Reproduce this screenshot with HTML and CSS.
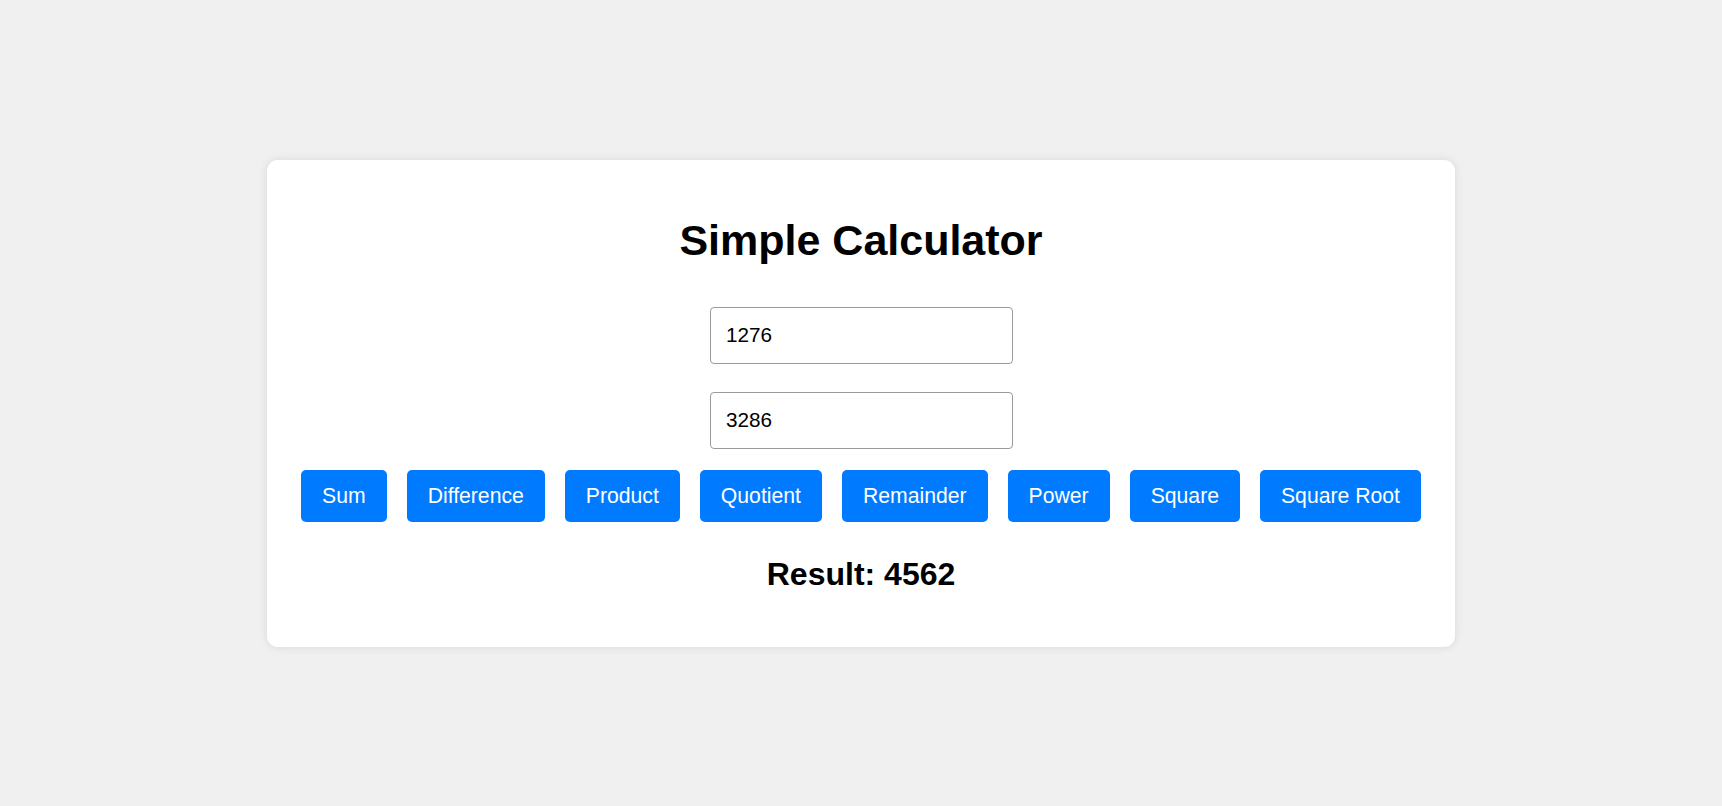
FILE: index.html
```html
<!DOCTYPE html>
<html>
<head>
<meta charset="utf-8">
<link rel="stylesheet" href="styles.css">
</head>
<body>
<div class="page">
  <div class="card">
    <h1 class="title">Simple Calculator</h1>
    <input class="num" type="text" value="1276">
    <input class="num second" type="text" value="3286">
    <div class="buttons">
      <button class="btn">Sum</button>
      <button class="btn">Difference</button>
      <button class="btn">Product</button>
      <button class="btn">Quotient</button>
      <button class="btn">Remainder</button>
      <button class="btn">Power</button>
      <button class="btn">Square</button>
      <button class="btn">Square Root</button>
    </div>
    <h2 class="result">Result: 4562</h2>
  </div>
</div>
</body>
</html>
```
FILE: styles.css
```css
html, body {
  margin: 0;
  padding: 0;
  background: #f0f0f0;
  font-family: "Liberation Sans", Arial, sans-serif;
}
.page {
  height: 806px;
  display: flex;
  align-items: center;
  justify-content: center;
}
.card {
  box-sizing: border-box;
  width: 1188px;
  height: 487px;
  background: #ffffff;
  border-radius: 11px;
  box-shadow: 0 0 10px rgba(0, 0, 0, 0.1);
  padding: 56px 31px 0;
  display: flex;
  flex-direction: column;
  align-items: center;
}
.title {
  margin: 0;
  font-size: 43px;
  line-height: 48px;
  font-weight: bold;
  color: #000;
}
.num {
  box-sizing: border-box;
  width: 303px;
  height: 57px;
  margin-top: 43px;
  padding: 0 15.5px;
  border: 1px solid #9a9a9a;
  border-radius: 4px;
  font-family: "Liberation Sans", Arial, sans-serif;
  font-size: 20.7px;
  color: #000;
  background: #fff;
  outline: none;
}
.num.second {
  margin-top: 28px;
}
.buttons {
  align-self: stretch;
  display: flex;
  justify-content: center;
  gap: 20px;
  margin-top: 21px;
}
.btn {
  height: 52px;
  padding: 0 21px;
  border: none;
  border-radius: 5px;
  background: #007bff;
  color: #ffffff;
  font-family: "Liberation Sans", Arial, sans-serif;
  font-size: 21.2px;
}
.result {
  margin: 34px 0 0;
  font-size: 32px;
  line-height: 37px;
  font-weight: bold;
  color: #000;
}
```
